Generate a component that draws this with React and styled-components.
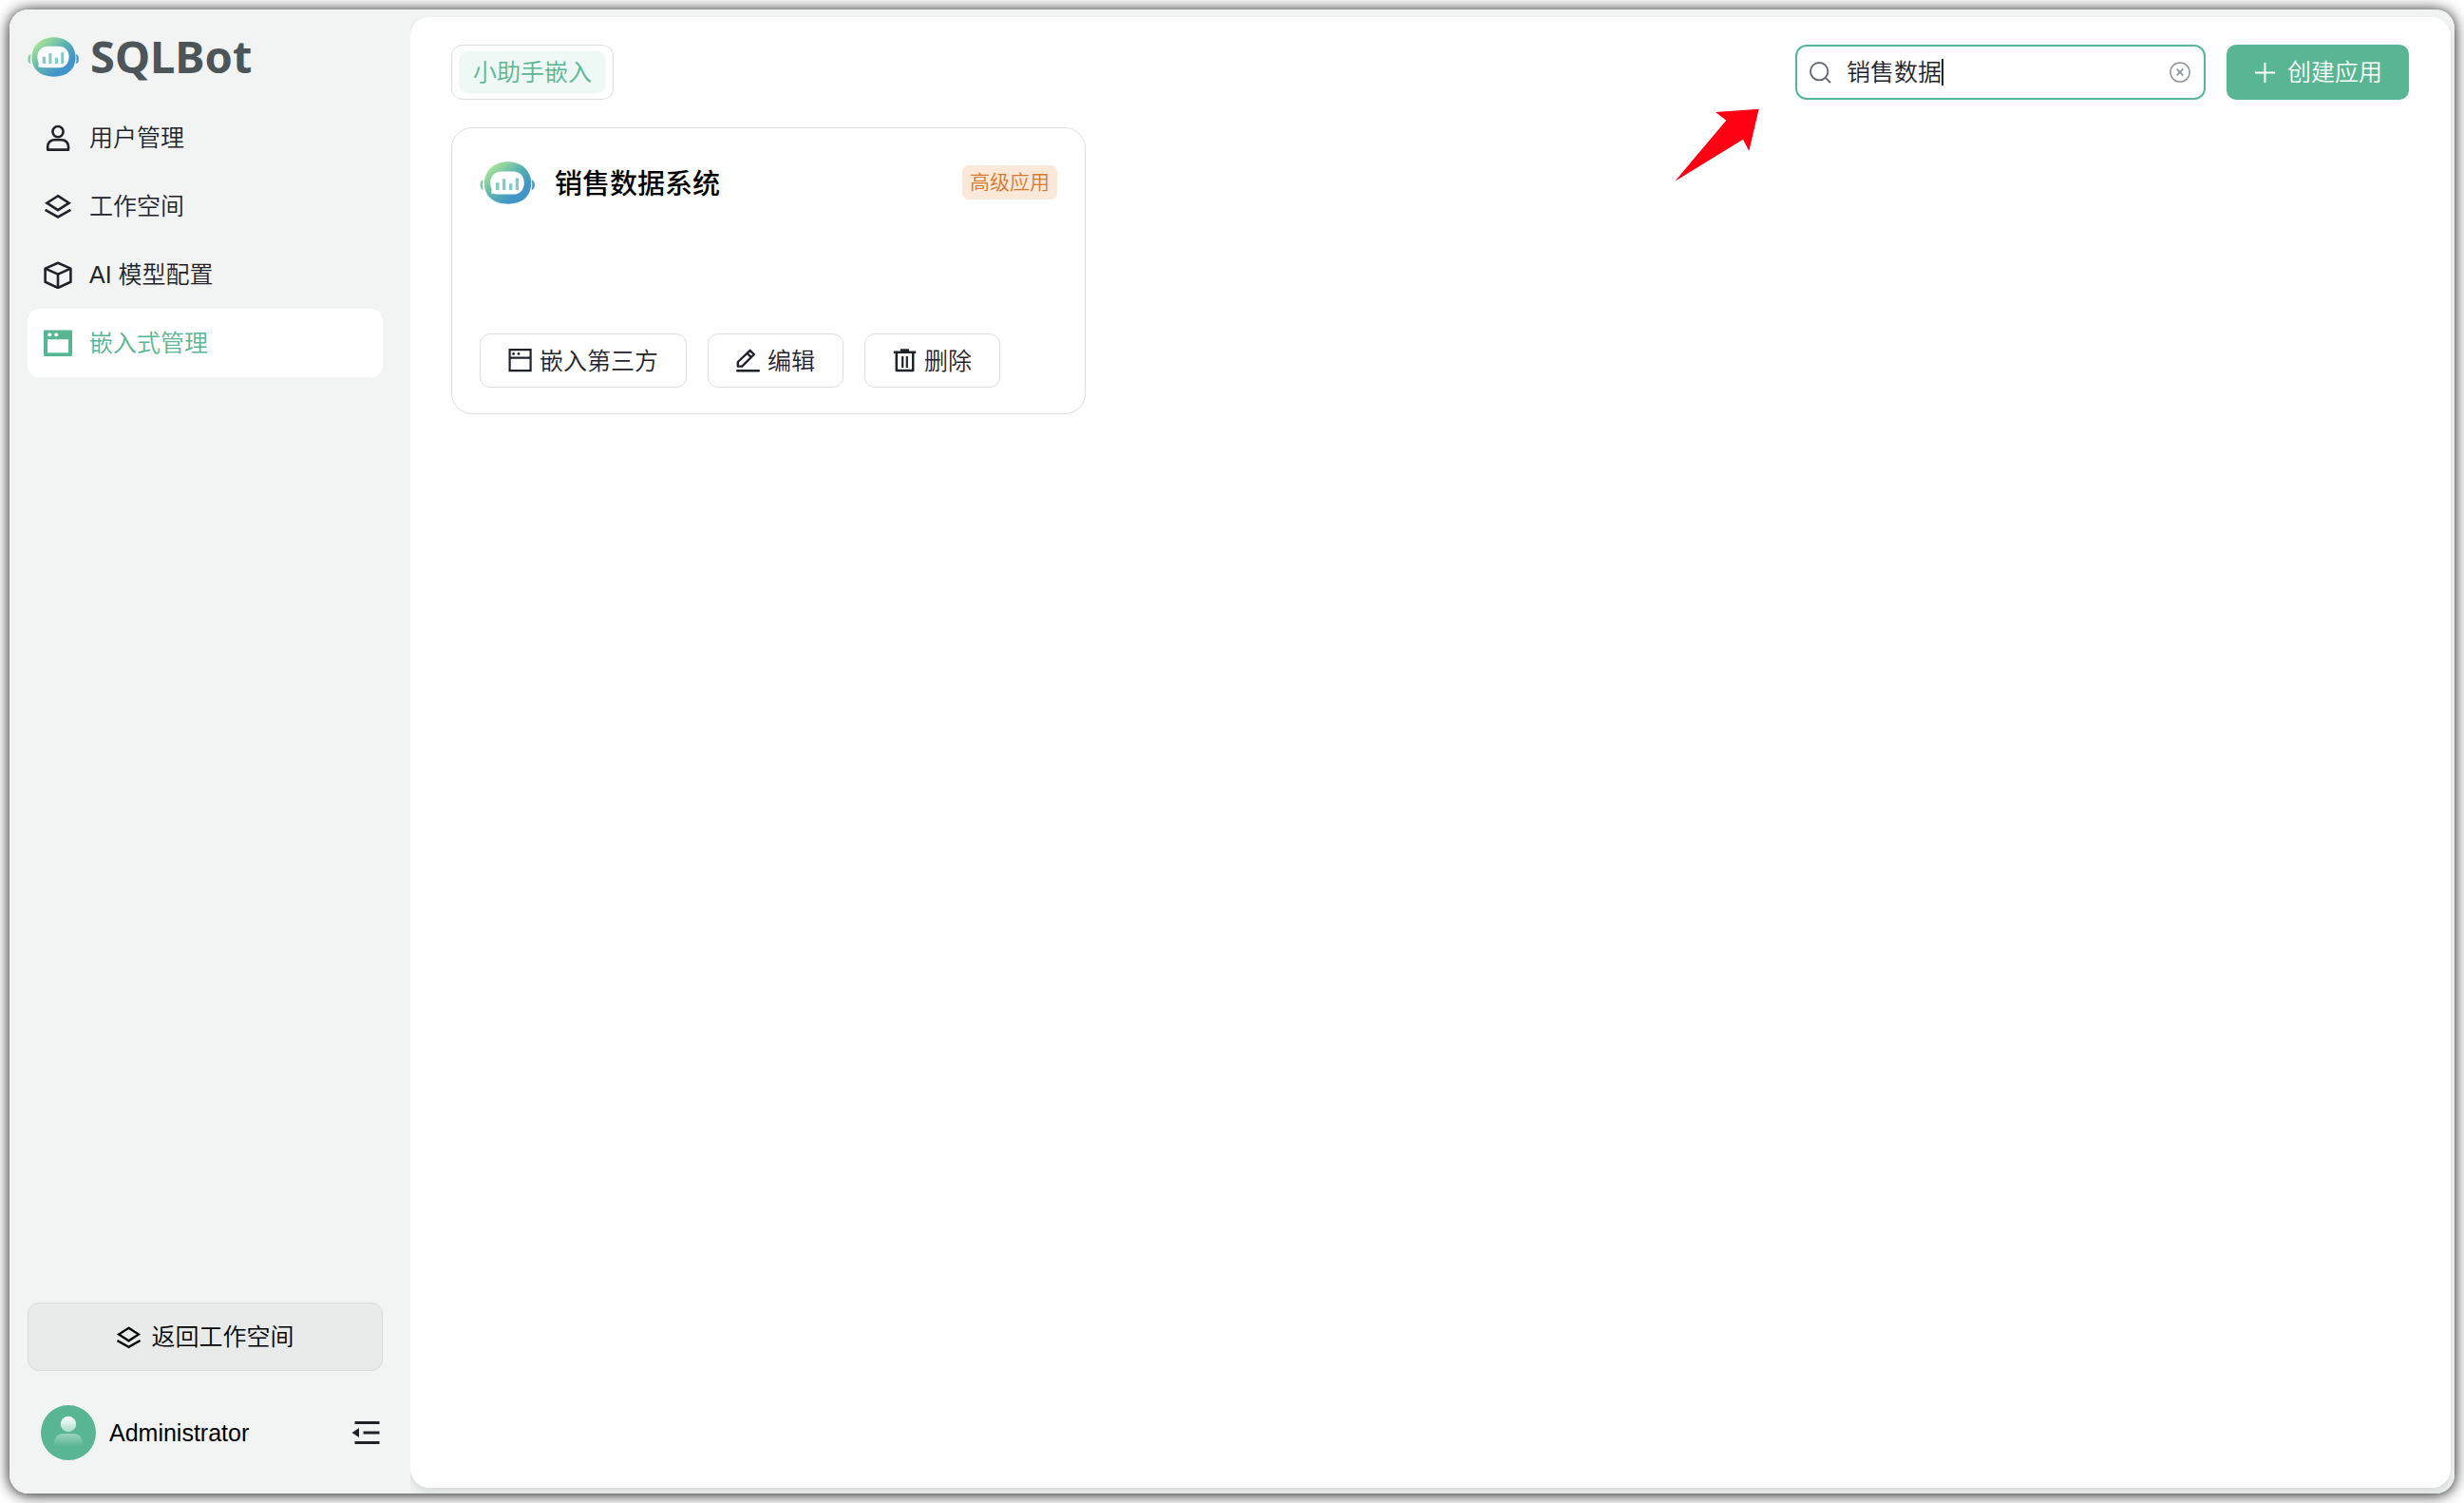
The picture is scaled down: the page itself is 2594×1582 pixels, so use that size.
import React, { useState } from "react";
import styled, { createGlobalStyle } from "styled-components";

const green = "#58b693";
const ink = "#1f2329";
const line = "#dcdedf";

const GlobalStyle = createGlobalStyle`
  *, *::before, *::after { box-sizing: border-box; }
  body {
    margin: 0;
    background: #fff;
    color: ${ink};
    font: 350 25px/36px "Liberation Sans", "Noto Sans CJK SC", sans-serif;
  }
  button, input { font: inherit; color: inherit; }
  svg { display: block; flex: none; }
`;

const Page = styled.div`
  display: flex;
  min-height: 100vh;
  padding: 10px;
`;

const Shell = styled.div`
  flex: 1;
  display: flex;
  overflow: hidden;
  border-radius: 20px;
  background: #f1f4f3;
`;

const Frame = styled.div`
  flex: 1;
  display: flex;
  border-radius: 20px;
  box-shadow: 0 1px 15px rgba(0, 0, 0, 0.95);
`;

const Sidebar = styled.aside`
  z-index: 1;
  display: flex;
  flex-direction: column;
  width: 422px;
  padding: 20px 29px 35px 19px;
  background: #f1f4f3;
`;

const Brand = styled.div`
  display: flex;
  align-items: center;
  gap: 12px;
  height: 60px;
  margin-bottom: 19px;
  color: #4c5558;
  font: 700 47px/58px "Noto Sans", "Open Sans", sans-serif;
`;

const BrandName = styled.span`
  padding-bottom: 2px;
`;

const Nav = styled.nav`
  display: flex;
  flex-direction: column;
`;

const NavItem = styled.a`
  display: flex;
  align-items: center;
  gap: 18px;
  height: 72px;
  padding: 0 17px;
  border-radius: 12px;
  text-decoration: none;
  color: ${(p) => (p.$active ? green : ink)};
  background: ${(p) => (p.$active ? "#fff" : "transparent")};
`;

const BackButton = styled.button`
  display: flex;
  align-items: center;
  justify-content: center;
  gap: 10px;
  height: 72px;
  margin-top: auto;
  margin-bottom: 36px;
  border: 1px solid #d9dbda;
  border-radius: 12px;
  background: #e9ebea;
  color: #000;
`;

const UserRow = styled.div`
  display: flex;
  align-items: center;
  gap: 14px;
  padding: 0 3px 0 14px;
  color: #000;
`;

const IconButton = styled.button`
  display: flex;
  padding: 0;
  border: 0;
  background: none;
  margin-left: auto;
  color: ${(p) => p.$tone || ink};
`;

const Main = styled.main`
  flex: 1;
  margin: 8px 4px 6px 0;
  padding: 29px 44px 29px 43px;
  border-radius: 20px;
  background: #fff;
  box-shadow: 0 5px 10px rgba(31, 35, 41, 0.12);
`;

const Toolbar = styled.header`
  display: flex;
  align-items: center;
  gap: 22px;
  height: 58px;
  margin-bottom: 29px;
`;

const Tabs = styled.div`
  display: flex;
  height: 58px;
  margin-right: auto;
  padding: 6px 7px;
  border: 1px solid ${line};
  border-radius: 12px;
`;

const Tab = styled.button`
  padding: 0 15px;
  border: 0;
  border-radius: 10px;
  background: #eef8f4;
  color: ${green};
  line-height: 36px;
`;

const SearchArea = styled.div`
  position: relative;
`;

const SearchBox = styled.label`
  display: flex;
  align-items: center;
  width: 432px;
  height: 58px;
  padding: 0 14px 0 13px;
  border: 2px solid ${green};
  border-radius: 12px;
  color: #646a73;
`;

const SearchInput = styled.input`
  field-sizing: content;
  max-width: 320px;
  height: 36px;
  margin-left: 16px;
  padding: 0;
  border: 0;
  outline: 0;
  background: none;
  color: ${ink};
  caret-color: transparent;
`;

const Caret = styled.span`
  width: 2px;
  height: 28px;
  background: ${ink};
`;

const Pointer = styled.svg`
  position: absolute;
  top: 67px;
  right: 470px;
`;

const CreateButton = styled.button`
  display: flex;
  align-items: center;
  justify-content: center;
  gap: 11px;
  height: 58px;
  padding: 0 28px;
  border: 0;
  border-radius: 10px;
  background: ${green};
  color: #fff;
`;

const Card = styled.article`
  display: flex;
  flex-direction: column;
  justify-content: space-between;
  width: 668px;
  height: 302px;
  padding: 29px 29px 27px;
  border: 1px solid ${line};
  border-radius: 22px;
`;

const CardHead = styled.div`
  display: flex;
  align-items: center;
  gap: 21px;
  height: 56px;
`;

const CardTitle = styled.h2`
  flex: 1;
  margin: 0;
  padding-top: 4px;
  color: #000;
  font-size: 29px;
  font-weight: 500;
  line-height: 40px;
`;

const Tag = styled.span`
  height: 36px;
  padding: 0 8px;
  border-radius: 7px;
  background: #fce8d8;
  color: #d27b2d;
  font-size: 21px;
  line-height: 36px;
`;

const CardActions = styled.div`
  display: flex;
  gap: 22px;
`;

const ActionButton = styled.button`
  display: flex;
  align-items: center;
  gap: 8px;
  height: 57px;
  padding: 0 29px;
  border: 1px solid ${line};
  border-radius: 11px;
  background: #fff;
`;

function BotLogo({ id, width }) {
  return (
    <svg width={width} height={Math.round((width * 134) / 172)} viewBox="0 0 172 134" aria-hidden="true">
      <defs>
        <linearGradient id={id} x1="30" y1="10" x2="130" y2="120" gradientUnits="userSpaceOnUse">
          <stop offset="0" stopColor="#b3e995" />
          <stop offset="0.5" stopColor="#5ab3b0" />
          <stop offset="0.85" stopColor="#4394c8" />
        </linearGradient>
      </defs>
      <path d="M11 58 C5 58 1 64 1 74 C1 84 5 89 11 89 C8 80 8 68 11 58z" fill="#7fcda5" />
      <path d="M162 58 C168 58 172 64 172 74 C172 84 168 89 162 89 C165 80 165 68 162 58z" fill="#4a97c6" />
      <path d="M88 1 C132 1 161 30 161 68 C161 110 132 133 88 133 C44 133 14 110 14 68 C14 30 44 1 88 1z" fill={`url(#${id})`} />
      <path d="M68 31 H105 C126 31 139 46 139 66 C139 88 126 103 105 103 H56 C50 103 44 99 36 101 L37 85 C34 80 33 73 33 66 C33 46 47 31 68 31z" fill="#fff" />
      <path d="M50 66h11v23h-11z M71 54h10v35h-10z M92 69h10v20h-10z M112 52h10v37h-10z" fill="#84cbc8" />
    </svg>
  );
}

const stroke = { fill: "none", stroke: "currentColor", strokeWidth: 2.6 };

const UserIcon = () => (
  <svg width="30" height="30" viewBox="0 0 30 30" {...stroke}>
    <circle cx="15" cy="8.6" r="5.6" />
    <path d="M4.2 27.6v-3.4a7 7 0 0 1 7-7h7.8a7 7 0 0 1 7 7v3.4z" strokeLinejoin="round" />
  </svg>
);

const LayersIcon = ({ size = 30 }) => (
  <svg width={size} height={size} viewBox="0 0 30 30" {...stroke}>
    <path d="M15 4.2L26.6 11.7 15 19.2 3.4 11.7z" />
    <path d="M1.6 18.8L15 26.5 28.4 18.8" />
  </svg>
);

const CubeIcon = () => (
  <svg width="30" height="30" viewBox="0 0 30 30" {...stroke}>
    <path d="M15 2.8L28.4 8.6V22.8L15 29 1.6 22.8V8.6z" strokeLinejoin="round" />
    <path d="M1.6 8.6L15 14.6 28.4 8.6M15 14.6V29" />
  </svg>
);

const WindowFillIcon = () => (
  <svg width="30" height="30" viewBox="0 0 30 30">
    <path fill="currentColor" fillRule="evenodd" d="M1 1.4h28a1 1 0 0 1 1 1v25.6a1 1 0 0 1-1 1H1a1 1 0 0 1-1-1V2.4a1 1 0 0 1 1-1zM4 11.2v14h22v-14z" />
    <circle cx="6.3" cy="6.3" r="2" fill="#fff" />
    <circle cx="13.2" cy="6.3" r="2" fill="#fff" />
  </svg>
);

const WindowIcon = () => (
  <svg width="25" height="25" viewBox="0 0 25 25" {...stroke} strokeWidth="2.2">
    <path d="M1.6 1.2h22v22h-22zM1.6 9.6h22" />
    <circle cx="5.6" cy="5.4" r="1.4" fill="currentColor" stroke="none" />
    <circle cx="11" cy="5.4" r="1.4" fill="currentColor" stroke="none" />
  </svg>
);

const EditIcon = () => (
  <svg width="25" height="25" viewBox="0 0 25 25" {...stroke} strokeWidth="2.4">
    <path d="M1.8 18.6v-4.6L14.6 1.8l4.2 4.2L6.2 18.6zM11.6 4.8l4.2 4.2" strokeLinejoin="round" />
    <path d="M1.2 23.2h22.6" strokeLinecap="round" />
  </svg>
);

const TrashIcon = () => (
  <svg width="25" height="25" viewBox="0 0 25 25" {...stroke} strokeWidth="2.5">
    <path d="M0.8 3.8h23.4M8 1.5h9M3.8 3.8v19.2h17.4v-19.2" strokeLinejoin="round" />
    <path d="M10.2 8v12M14.8 8v12" strokeWidth="2.2" />
  </svg>
);

const SearchIcon = () => (
  <svg width="23" height="23" viewBox="0 0 23 23" {...stroke} strokeWidth="1.9">
    <circle cx="10.2" cy="10.2" r="9.2" />
    <path d="M16.8 16.8L22 22" />
  </svg>
);

const ClearIcon = () => (
  <svg width="22" height="22" viewBox="0 0 22 22" {...stroke} strokeWidth="1.5">
    <circle cx="11" cy="11" r="10.1" />
    <path d="M7.7 7.7l6.6 6.6M14.3 7.7l-6.6 6.6" strokeWidth="1.7" />
  </svg>
);

const PlusIcon = () => (
  <svg width="25" height="25" viewBox="0 0 25 25" {...stroke} strokeWidth="2">
    <path d="M12.5 2v21M2 12.5h21" />
  </svg>
);

const CollapseIcon = () => (
  <svg width="30" height="30" viewBox="0 0 30 30" {...stroke} strokeWidth="3">
    <path d="M3.5 4.5h26M12.5 15h17M3.5 25.5h26" strokeLinecap="butt" />
    <path d="M0.5 15L8 10v10z" fill="currentColor" stroke="none" />
  </svg>
);

const Avatar = () => (
  <svg width="58" height="58" viewBox="0 0 58 58" role="img" aria-label="Administrator">
    <defs>
      <linearGradient id="avatar-head" x1="0" y1="0" x2="0" y2="1">
        <stop offset="0" stopColor="#fff" />
        <stop offset="1" stopColor="#fff" stopOpacity="0.5" />
      </linearGradient>
      <linearGradient id="avatar-body" x1="0" y1="0" x2="0" y2="1">
        <stop offset="0" stopColor="#fff" stopOpacity="0.4" />
        <stop offset="1" stopColor="#fff" stopOpacity="0" />
      </linearGradient>
    </defs>
    <circle cx="29" cy="29" r="29" fill={green} />
    <circle cx="29" cy="20" r="8.2" fill="url(#avatar-head)" />
    <path d="M14 44v-5a9 9 0 0 1 9-9h12a9 9 0 0 1 9 9v5z" fill="url(#avatar-body)" />
  </svg>
);

const navItems = [
  { label: "用户管理", Icon: UserIcon },
  { label: "工作空间", Icon: LayersIcon },
  { label: "AI 模型配置", Icon: CubeIcon },
  { label: "嵌入式管理", Icon: WindowFillIcon, active: true },
];

const actions = [
  { label: "嵌入第三方", Icon: WindowIcon },
  { label: "编辑", Icon: EditIcon },
  { label: "删除", Icon: TrashIcon },
];

export default function App() {
  const [query, setQuery] = useState("销售数据");

  return (
    <>
      <GlobalStyle />
      <Page>
        <Frame>
          <Shell>
            <Sidebar>
              <Brand>
                <BotLogo id="brand-logo" width={54} />
                <BrandName>SQLBot</BrandName>
              </Brand>
              <Nav>
                {navItems.map(({ label, Icon, active }) => (
                  <NavItem key={label} href="#" $active={active} aria-current={active ? "page" : undefined}>
                    <Icon />
                    {label}
                  </NavItem>
                ))}
              </Nav>
              <BackButton type="button">
                <LayersIcon size={27} />
                返回工作空间
              </BackButton>
              <UserRow>
                <Avatar />
                <span>Administrator</span>
                <IconButton type="button" aria-label="收起">
                  <CollapseIcon />
                </IconButton>
              </UserRow>
            </Sidebar>
            <Main>
              <Toolbar>
                <Tabs>
                  <Tab type="button">小助手嵌入</Tab>
                </Tabs>
                <SearchArea>
                  <SearchBox>
                    <SearchIcon />
                    <SearchInput
                      aria-label="搜索"
                      value={query}
                      onChange={(e) => setQuery(e.target.value)}
                    />
                    <Caret />
                    <IconButton type="button" aria-label="清除" $tone="#8f959e" onClick={() => setQuery("")}>
                      <ClearIcon />
                    </IconButton>
                  </SearchBox>
                  <Pointer width="89" height="77" viewBox="0 0 267 231" aria-hidden="true">
                    <path d="M1 230L163 38 129 12 266 2 235 135 216 98z" fill="#ff0013" />
                  </Pointer>
                </SearchArea>
                <CreateButton type="button">
                  <PlusIcon />
                  创建应用
                </CreateButton>
              </Toolbar>
              <Card>
                <CardHead>
                  <BotLogo id="card-logo" width={58} />
                  <CardTitle>销售数据系统</CardTitle>
                  <Tag>高级应用</Tag>
                </CardHead>
                <CardActions>
                  {actions.map(({ label, Icon }) => (
                    <ActionButton key={label} type="button">
                      <Icon />
                      {label}
                    </ActionButton>
                  ))}
                </CardActions>
              </Card>
            </Main>
          </Shell>
        </Frame>
      </Page>
    </>
  );
}
